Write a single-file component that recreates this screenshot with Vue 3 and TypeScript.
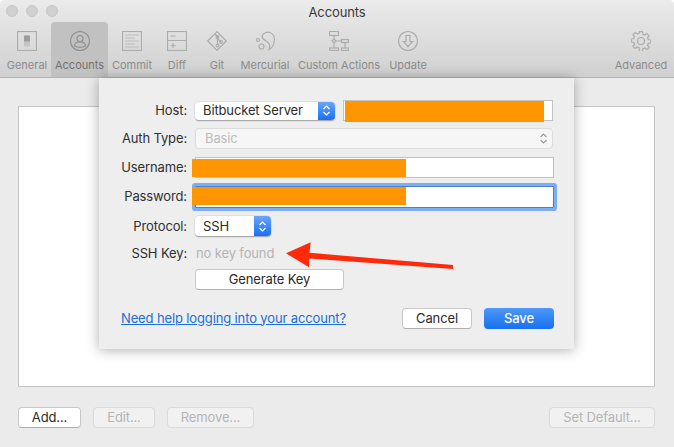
<script setup lang="ts">
const title = 'Accounts'
</script>

<template>
  <div class="win">
    <header class="head">
      <div class="titlebar">
        <div class="lights"><i></i><i></i><i></i></div>
        <span class="title">{{ title }}</span>
      </div>
      <nav class="toolbar">
        <div class="tool w-general">
          <svg viewBox="0 0 20 20"><rect x=".5" y=".5" width="19" height="19" /><rect class="g" x="7" y="4.500" width="6" height="11" rx="1" /><rect class="f" x="7" y="4.500" width="6" height="6" rx="1" /></svg>
          <span>General</span>
        </div>
        <div class="tool w-accounts on">
          <svg viewBox="0 0 20 20"><circle cx="10" cy="10" r="9.500" /><circle cx="10" cy="7.500" r="3" /><path d="M4.500 15c0-3 2-4.200 5.500-4.200s5.500 1.200 5.500 4.200c-3 1.800-8 1.800-11 0z" /></svg>
          <span>Accounts</span>
        </div>
        <div class="tool w-commit">
          <svg viewBox="0 0 20 20"><rect x=".5" y=".5" width="19" height="19" /><path class="thin" d="M3 4h14M3 7h10M3 10h14M3 13h10M3 16h14" /></svg>
          <span>Commit</span>
        </div>
        <div class="tool w-diff">
          <svg viewBox="0 0 20 20"><rect x=".5" y=".5" width="19" height="19" /><path d="M.5 9.500h19M3.500 5h5M3.500 14.500h5M6 12v5" /></svg>
          <span>Diff</span>
        </div>
        <div class="tool w-git">
          <svg viewBox="0 0 20 20"><path d="M10 .7L19.300 10 10 19.300 .7 10zM8 3l2.500 2.500v8M10.500 7.500l3.500 3.500" /><circle cx="10.500" cy="14.500" r="1.400" /><circle cx="10.500" cy="6" r="1.400" /><circle cx="14" cy="11" r="1.400" /></svg>
          <span>Git</span>
        </div>
        <div class="tool w-hg">
          <svg viewBox="0 0 20 20"><path d="M7 5c1-3 5-4.500 8-3.500 4 1.500 5 6 4 10-.5 3-3 6-5 7 1.500-3 1-5-1-7-2.500-2-6-3-6-6.500z" /><circle cx="3" cy="9" r="1.500" /><circle cx="6.500" cy="15.500" r="2.500" /></svg>
          <span>Mercurial</span>
        </div>
        <div class="tool w-custom">
          <svg viewBox="0 0 20 20"><rect x=".5" y=".5" width="9" height="4" /><rect x=".5" y="17" width="9" height="2.500" /><rect x="12.500" y="8.500" width="7" height="3" /><rect x="12.500" y="17" width="7" height="2.500" /><path d="M5 4.500V8M5 12v5M5 8l2 2-2 2-2-2zM7 10h5.500M16 11.500V17" /></svg>
          <span>Custom Actions</span>
        </div>
        <div class="tool w-update">
          <svg viewBox="0 0 20 20"><circle cx="10" cy="10" r="9.500" /><path d="M8 4.500h4v6h2.500L10 15.500 5.500 10.500H8z" /></svg>
          <span>Update</span>
        </div>
        <div class="spacer"></div>
        <div class="tool w-adv">
          <svg viewBox="0 0 20 20"><path d="M8.500.7h3l.5 2.600 1.700.7 2.200-1.500 2.100 2.100-1.500 2.200.7 1.700 2.600.5v3l-2.600.5-.7 1.700 1.500 2.200-2.100 2.100-2.200-1.500-1.700.7-.5 2.600h-3L8 16.700l-1.700-.7-2.200 1.500L2 15.400l1.500-2.200-.7-1.700L.2 11V8l2.600-.5.7-1.700L2 3.600 4.100 1.500l2.200 1.500L8 2.300z" /><circle cx="10" cy="10" r="3.500" /></svg>
          <span>Advanced</span>
        </div>
      </nav>
    </header>

    <main class="content">
      <div class="list"></div>
      <div class="actions">
        <button class="btn add">Add...</button>
        <button class="btn dim edit">Edit...</button>
        <button class="btn dim remove">Remove...</button>
        <div class="spacer"></div>
        <button class="btn dim setdef">Set Default...</button>
      </div>
    </main>

    <section class="sheet">
      <div class="row r-host">
        <label>Host:</label>
        <div class="select host-select">
          <span>Bitbucket Server</span>
          <b class="stepper"><svg viewBox="0 0 9 13"><path d="M1.500 5L4.500 2l3 3M1.500 8l3 3 3-3" /></svg></b>
        </div>
        <div class="field host-field"><div class="mask mask-host"></div></div>
      </div>
      <div class="row r-auth">
        <label>Auth Type:</label>
        <div class="auth">
          <span>Basic</span>
          <svg viewBox="0 0 9 13"><path d="M1.500 5L4.500 2l3 3M1.500 8l3 3 3-3" /></svg>
        </div>
      </div>
      <div class="row r-user">
        <label>Username:</label>
        <div class="field wide-field"><div class="mask mask-user"></div></div>
      </div>
      <div class="row r-pass">
        <label>Password:</label>
        <div class="field wide-field focus"><div class="mask mask-pass"></div></div>
      </div>
      <div class="row r-proto">
        <label>Protocol:</label>
        <div class="select proto-select">
          <span>SSH</span>
          <b class="stepper"><svg viewBox="0 0 9 13"><path d="M1.500 5L4.500 2l3 3M1.500 8l3 3 3-3" /></svg></b>
        </div>
      </div>
      <div class="row r-key">
        <label>SSH Key:</label>
        <span class="nokey">no key found</span>
      </div>
      <div class="row r-gen">
        <button class="btn gen">Generate Key</button>
      </div>
      <div class="foot">
        <a class="help">Need help logging into your account?</a>
        <div class="spacer"></div>
        <button class="btn cancel">Cancel</button>
        <button class="btn save">Save</button>
      </div>
    </section>

    <svg class="arrow" viewBox="0 0 180 34"><path d="M6 15.300L30.700 4.300 29.500 14.800 173 27v4L29.300 20.500 29 29.300z" /></svg>
  </div>
</template>

<style scoped>
.win {
  position: relative;
  width: 674px;
  height: 447px;
  display: flex;
  flex-direction: column;
  overflow: hidden;
  background: #ebebeb;
  border-radius: 5px 5px 0 0;
  font-family: Inter, Roboto, "Liberation Sans", sans-serif;
  font-size: 13px;
  letter-spacing: -0.13px;
  color: #2b2b2b;
}
.head {
  height: 78px;
  box-sizing: border-box;
  border-bottom: 1px solid #b4b4b4;
  background: linear-gradient(#ebebeb, #d0d0d0);
  flex: none;
}
.titlebar {
  position: relative;
  height: 22px;
  display: flex;
  align-items: center;
  justify-content: center;
}
.lights {
  position: absolute;
  left: 6px;
  top: 5px;
  display: flex;
  gap: 8px;
}
.lights i {
  width: 12px;
  height: 12px;
  box-sizing: border-box;
  border-radius: 50%;
  background: #d0d0d0;
  border: 1px solid #c4c4c4;
}
.title {
  color: #3a3a3a;
  font-size: 13px;
  padding-top: 1px;
}
.toolbar {
  display: flex;
  height: 55px;
  padding-left: 3px;
}
.spacer { flex: 1; }
.tool {
  flex: none;
  box-sizing: border-box;
  display: flex;
  flex-direction: column;
  align-items: center;
  padding-top: 9px;
  font-size: 11px;
  letter-spacing: 0;
  color: #8c8c8c;
  white-space: nowrap;
}
.tool svg {
  width: 20px;
  height: 20px;
  fill: none;
  stroke: #acacac;
  stroke-width: 1.200;
  margin-bottom: 7px;
}
.tool svg .f { fill: #9c9c9c; stroke: none; }
.tool svg .g { fill: #c4c4c4; stroke: none; }
.tool svg .thin { stroke-width: 1; stroke: #bcbcbc; }
.tool.on {
  background: #c1c1c1;
  border-radius: 4px 4px 0 0;
  color: #737373;
}
.tool.on svg { stroke: #919191; }
.w-general { width: 48px; }
.w-accounts { width: 57px; }
.w-commit { width: 48px; }
.w-diff { width: 42px; }
.w-git { width: 38px; }
.w-hg { width: 58px; }
.w-custom { width: 90px; }
.w-update { width: 48px; }
.w-adv { width: 62px; margin-right: 2px; }

.content {
  flex: 1;
  display: flex;
  flex-direction: column;
  padding: 28px 19px 19px 18px;
  min-height: 0;
}
.list {
  height: 281px;
  box-sizing: border-box;
  background: #fff;
  border: 1px solid #c4c4c4;
  flex: none;
}
.actions {
  display: flex;
  margin-top: 20px;
  height: 21px;
}
.btn {
  box-sizing: border-box;
  height: 21px;
  padding: 0 0 1px;
  font: inherit;
  letter-spacing: inherit;
  color: #2b2b2b;
  background: #fff;
  border: 1px solid #c8c8c8;
  border-bottom-color: #b0b0b0;
  border-radius: 4px;
}
.btn.dim {
  background: #f1f1f1;
  border-color: #dadada;
  color: #b5b5b5;
}
.add { width: 63px; }
.edit { width: 62px; margin-left: 12px; }
.remove { width: 87px; margin-left: 12px; }
.setdef { width: 106px; }

.sheet {
  position: absolute;
  left: 99px;
  top: 78px;
  width: 475px;
  height: 271px;
  box-sizing: border-box;
  padding-top: 22px;
  display: flex;
  flex-direction: column;
  background: #eeeeee;
  box-shadow: 0 1px 12px rgba(0, 0, 0, 0.32);
}
.row {
  display: flex;
  align-items: center;
  height: 21px;
}
.row label {
  width: 88px;
  flex: none;
  text-align: right;
  color: #303030;
  padding-bottom: 2px;
}
.r-auth { margin-top: 7px; }
.r-user { margin-top: 8px; }
.r-pass { margin-top: 8px; height: 22px; }
.r-proto { margin-top: 8px; }
.r-key { margin-top: 6px; height: 19px; }
.r-key label { padding-bottom: 0; }
.r-gen { margin-top: 7px; padding-left: 96px; }

.select {
  position: relative;
  box-sizing: border-box;
  display: flex;
  align-items: center;
  margin-left: 8px;
  padding: 0 0 1px 8px;
  background: #fff;
  border-radius: 4px;
  border-bottom: 1px solid #a9a9a9;
  box-shadow: 0 0 0 .5px #cfcfcf;
  overflow: hidden;
}
.host-select { width: 140px; height: 19px; margin-top: 1px; }
.proto-select { width: 76px; height: 21px; }
.stepper {
  position: absolute;
  right: 0;
  top: 0;
  bottom: 0;
  width: 17px;
  display: flex;
  align-items: center;
  justify-content: center;
  background: linear-gradient(#6aa5f7, #1b6ff3);
}
.stepper svg { width: 9px; height: 13px; fill: none; stroke: #fff; stroke-width: 1.200; }
.field {
  box-sizing: border-box;
  height: 21px;
  background: #fff;
  border: 1px solid #c2c2c2;
}
.host-field { width: 210px; margin-left: 8px; }
.wide-field { width: 359px; height: 21px; margin-left: 8px; }
.r-pass .wide-field { height: 22px; }
.focus {
  border-color: #4d7fd0;
  box-shadow: 0 0 0 3px #7dadf3;
  border-radius: 1px;
}
.mask { background: #ff9500; }
.mask-host { width: 199px; height: 21px; margin-left: 1px; }
.mask-user { width: 214px; height: 18px; margin-left: -4px; margin-top: 1px; }
.mask-pass { width: 214px; height: 18px; margin-left: -4px; }
.auth {
  box-sizing: border-box;
  width: 358px;
  height: 21px;
  margin-left: 8px;
  padding: 0 4px 1px 9px;
  display: flex;
  align-items: center;
  justify-content: space-between;
  background: #f6f6f6;
  border: 1px solid #dcdcdc;
  border-radius: 4px;
  color: #bcbcbc;
}
.auth svg { width: 9px; height: 13px; fill: none; stroke: #9a9a9a; stroke-width: 1.100; }
.nokey { margin-left: 9px; color: #b4b4b4; }
.gen { width: 149px; }
.foot {
  display: flex;
  align-items: center;
  height: 21px;
  margin-top: 18px;
  padding: 0 20px 0 22px;
}
.help {
  color: #1a6fdc;
  text-decoration: underline;
  padding-bottom: 2px;
}
.cancel { width: 70px; }
.save {
  width: 70px;
  margin-left: 12px;
  color: #fff;
  font-weight: 500;
  border: none;
  background: linear-gradient(#4d98f9, #1670f2);
}
.arrow {
  position: absolute;
  left: 280px;
  top: 238px;
  width: 180px;
  height: 34px;
  fill: #ff2a0c;
}
</style>

<style>
html, body { margin: 0; background: #fff; }
</style>
